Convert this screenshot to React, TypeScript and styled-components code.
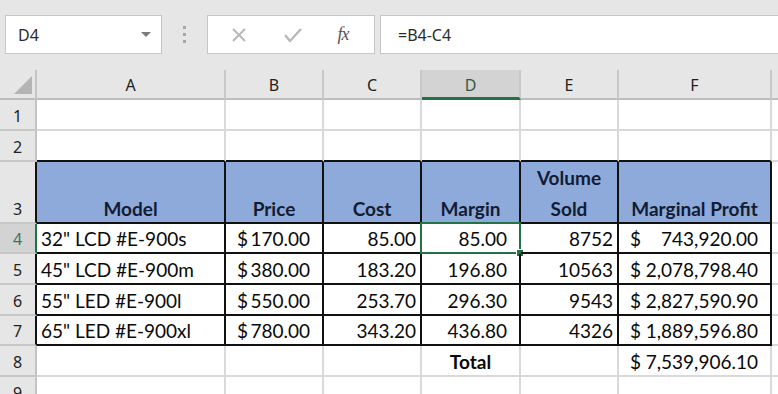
import React from "react";
import styled, { createGlobalStyle, css } from "styled-components";

const GlobalStyle = createGlobalStyle`
	html, body {
		margin: 0;
		padding: 0;
		background: #ffffff;
	}
	* {
		box-sizing: border-box;
	}
`;

const GRID = "#d9d9d9";
const BLACK = "#111111";
const GREEN = "#217346";

const Window = styled.div`
	width: 778px;
	height: 394px;
	overflow: hidden;
	background: #e6e6e6;
	font-family: "Noto Sans", "Open Sans", sans-serif;
`;

const FormulaBar = styled.div`
	display: flex;
	align-items: center;
	height: 70px;
	padding: 15px 0 16px 5px;
`;

const NameBox = styled.div`
	display: flex;
	align-items: center;
	justify-content: space-between;
	width: 157px;
	height: 39px;
	padding: 0 10px 0 12px;
	background: #ffffff;
	border: 1px solid #c6c6c6;
	font-size: 16px;
	color: #2b2b2b;
`;

const DropArrow = styled.span`
	width: 0;
	height: 0;
	border-left: 5px solid transparent;
	border-right: 5px solid transparent;
	border-top: 5px solid #7a7a7a;
`;

const Grip = styled.div`
	display: flex;
	flex-direction: column;
	gap: 4px;
	margin: 0 21px;
	span {
		width: 3px;
		height: 3px;
		background: #a6a6a6;
	}
`;

const ButtonBox = styled.div`
	display: flex;
	align-items: center;
	justify-content: space-around;
	width: 168px;
	height: 39px;
	padding: 0 8px 0 4px;
	background: #ffffff;
	border: 1px solid #c6c6c6;
`;

const FxLabel = styled.span`
	font-family: "Liberation Serif", serif;
	font-style: italic;
	font-size: 18px;
	color: #555555;
	letter-spacing: -1px;
`;

const FormulaInput = styled.div`
	flex: 1;
	height: 39px;
	margin-left: 5px;
	display: flex;
	align-items: center;
	padding-left: 17px;
	background: #ffffff;
	border: 1px solid #c6c6c6;
	border-right: none;
	font-size: 16px;
	color: #2b2b2b;
`;

const Sheet = styled.div`
	display: grid;
	grid-template-columns: 37px 189px 98px 98px 99px 98px 153px 1fr;
	grid-template-rows: 30px 31px 31px 62px 30px 31px 31px 30px 31px 31px;
	background: #ffffff;
`;

const Corner = styled.div`
	position: relative;
	background: #e6e6e6;
	border-right: 2px solid #c4c4c4;
	border-bottom: 2px solid #bdbdbd;
	&::after {
		content: "";
		position: absolute;
		right: 3px;
		bottom: 4px;
		width: 0;
		height: 0;
		border-left: 18px solid transparent;
		border-bottom: 18px solid #b4b4b4;
	}
`;

const ColHead = styled.div<{ $active?: boolean }>`
	display: flex;
	align-items: center;
	justify-content: center;
	padding-top: 2px;
	background: ${(p) => (p.$active ? "#d3d3d3" : "#e6e6e6")};
	border-right: 2px solid #c8c8c8;
	border-bottom: 2px solid ${(p) => (p.$active ? GREEN : "#bdbdbd")};
	${(p) => p.$active && "border-bottom-width: 3px;"}
	font-size: 16px;
	color: ${(p) => (p.$active ? "#2f5a43" : "#222222")};
`;

const RowHead = styled.div<{ $active?: boolean; $edge?: string }>`
	display: flex;
	align-items: flex-end;
	justify-content: center;
	padding-bottom: 2px;
	background: ${(p) => (p.$active ? "#d3d3d3" : "#e6e6e6")};
	border-right: 2px solid ${(p) => p.$edge || "#c4c4c4"};
	border-bottom: 2px solid #c8c8c8;
	font-size: 16px;
	color: ${(p) => (p.$active ? "#3d7357" : "#222222")};
`;

type Align = "left" | "right" | "center" | "acct";

const Cell = styled.div<{
	$r?: string;
	$b?: string;
	$align?: Align;
	$head?: boolean;
	$bold?: boolean;
	$pad?: number;
}>`
	position: relative;
	display: flex;
	align-items: flex-end;
	min-width: 0;
	white-space: nowrap;
	font-family: Lato, "Open Sans", sans-serif;
	font-size: 19px;
	line-height: 26px;
	color: #0a0a0a;
	border-right: 2px solid ${(p) => p.$r || GRID};
	border-bottom: 2px solid ${(p) => p.$b || GRID};
	padding: 0 ${(p) => p.$pad ?? 4}px 0 4px;
	justify-content: ${(p) =>
		p.$align === "right"
			? "flex-end"
			: p.$align === "center"
			? "center"
			: p.$align === "acct"
			? "space-between"
			: "flex-start"};
	${(p) => p.$align === "acct" && "padding: 0 12px 0 11px;"}
	${(p) =>
		p.$head &&
		css`
			background: #8eaadb;
			color: #121c33;
			font-weight: 700;
			text-align: center;
		`}
	${(p) => p.$bold && "font-weight: 700;"}
`;

const Stack = styled.div`
	display: flex;
	flex-direction: column;
	align-items: center;
	line-height: 31px;
	margin-bottom: -2px;
`;

const ActiveFrame = styled.div`
	position: absolute;
	left: -2px;
	top: -2px;
	right: -2px;
	bottom: -2px;
	border: 2px solid ${GREEN};
	pointer-events: none;
`;

const FillHandle = styled.div`
	position: absolute;
	right: -5px;
	bottom: -5px;
	width: 8px;
	height: 8px;
	background: ${GREEN};
	border: 1px solid #ffffff;
`;

const XIcon = () => (
	<svg width="18" height="18" viewBox="0 0 18 18">
		<path d="M3 3 L15 15 M15 3 L3 15" stroke="#b8b8b8" strokeWidth="2" />
	</svg>
);

const CheckIcon = () => (
	<svg width="20" height="18" viewBox="0 0 20 18">
		<path d="M2 9 L7 15 L18 3" stroke="#b8b8b8" strokeWidth="2.4" fill="none" />
	</svg>
);

const cols = ["A", "B", "C", "D", "E", "F", "G"];

const rows = [
	{ model: '32" LCD #E-900s', price: "170.00", cost: "85.00", margin: "85.00", vol: "8752", profit: "743,920.00" },
	{ model: '45" LCD #E-900m', price: "380.00", cost: "183.20", margin: "196.80", vol: "10563", profit: "2,078,798.40" },
	{ model: '55" LED #E-900l', price: "550.00", cost: "253.70", margin: "296.30", vol: "9543", profit: "2,827,590.90" },
	{ model: '65" LED #E-900xl', price: "780.00", cost: "343.20", margin: "436.80", vol: "4326", profit: "1,889,596.80" },
];

function Acct({ v }: { v: string }) {
	return (
		<>
			<span>$</span>
			<span>{v}</span>
		</>
	);
}

function App() {
	return (
		<Window>
			<GlobalStyle />
			<FormulaBar>
				<NameBox>
					D4
					<DropArrow />
				</NameBox>
				<Grip>
					<span />
					<span />
					<span />
				</Grip>
				<ButtonBox>
					<XIcon />
					<CheckIcon />
					<FxLabel>fx</FxLabel>
				</ButtonBox>
				<FormulaInput>=B4-C4</FormulaInput>
			</FormulaBar>
			<Sheet>
				<Corner />
				{cols.map((c) => (
					<ColHead key={c} $active={c === "D"}>
						{c === "G" ? "" : c}
					</ColHead>
				))}

				<RowHead>1</RowHead>
				{cols.map((c) => (
					<Cell key={"1" + c} />
				))}

				<RowHead>2</RowHead>
				{cols.map((c, i) => (
					<Cell key={"2" + c} $b={i < 6 ? BLACK : GRID} />
				))}

				<RowHead $edge={BLACK}>3</RowHead>
				<Cell $head $r={BLACK} $b={BLACK} $align="center">Model</Cell>
				<Cell $head $r={BLACK} $b={BLACK} $align="center">Price</Cell>
				<Cell $head $r={BLACK} $b={BLACK} $align="center">Cost</Cell>
				<Cell $head $r={BLACK} $b={BLACK} $align="center">Margin</Cell>
				<Cell $head $r={BLACK} $b={BLACK} $align="center">
					<Stack>
						<span>Volume</span>
						<span>Sold</span>
					</Stack>
				</Cell>
				<Cell $head $r={BLACK} $b={BLACK} $align="center">Marginal Profit</Cell>
				<Cell />

				{rows.map((r, i) => (
					<React.Fragment key={r.model}>
						<RowHead $active={i === 0} $edge={i === 0 ? GREEN : BLACK}>
							{i + 4}
						</RowHead>
						<Cell $r={BLACK} $b={BLACK}>{r.model}</Cell>
						<Cell $r={BLACK} $b={BLACK} $align="acct">
							<Acct v={r.price} />
						</Cell>
						<Cell $r={BLACK} $b={BLACK} $align="right">{r.cost}</Cell>
						<Cell $r={BLACK} $b={BLACK} $align="right" $pad={12}>
							{r.margin}
							{i === 0 && (
								<ActiveFrame>
									<FillHandle />
								</ActiveFrame>
							)}
						</Cell>
						<Cell $r={BLACK} $b={BLACK} $align="right">{r.vol}</Cell>
						<Cell $r={BLACK} $b={BLACK} $align="acct">
							<Acct v={r.profit} />
						</Cell>
						<Cell />
					</React.Fragment>
				))}

				<RowHead>8</RowHead>
				<Cell />
				<Cell />
				<Cell />
				<Cell $align="center" $bold>Total</Cell>
				<Cell />
				<Cell $align="acct">
					<Acct v="7,539,906.10" />
				</Cell>
				<Cell />

				<RowHead>9</RowHead>
				{cols.map((c) => (
					<Cell key={"9" + c} />
				))}
			</Sheet>
		</Window>
	);
}

export default App;
